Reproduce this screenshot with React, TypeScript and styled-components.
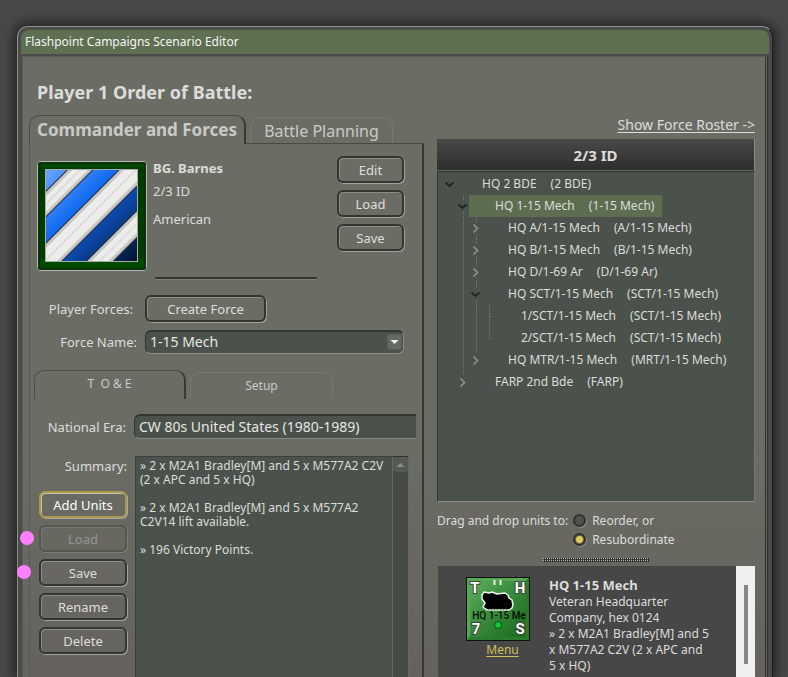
import React from 'react';
import styled, { createGlobalStyle, css } from 'styled-components';

const GlobalStyle = createGlobalStyle`
  * { box-sizing: border-box; }
  body {
    margin: 0;
    background: #484848;
    color: #dcdcda;
    font-family: "Noto Sans", "DejaVu Sans", sans-serif;
    font-size: 13px;
    overflow: hidden;
  }
  button, input, select, textarea { font: inherit; color: inherit; margin: 0; }
`;

const field = '#4b524b';

const Desktop = styled.div`
  display: flex;
  height: 100vh;
  padding: 26px 15px 0 17px;
`;

const AppWindow = styled.main`
  flex: 1;
  min-width: 0;
  display: flex;
  flex-direction: column;
  padding: 3px 3px 0;
  background: #4b4b4a;
  border: 1px solid #8e8e8c;
  border-right-color: #1c1c1c;
  border-bottom: 0;
  border-radius: 11px 11px 0 0;
  box-shadow: 0 0 12px 3px rgba(0, 0, 0, 0.55);
`;

const TitleBar = styled.header`
  flex: none;
  height: 24px;
  padding-left: 4px;
  border-radius: 8px 8px 0 0;
  background: #5f7052;
  color: #f4f4f2;
  font-size: 12px;
  line-height: 24px;
`;

const Content = styled.div`
  flex: 1;
  min-height: 0;
  display: flex;
  flex-direction: column;
  margin: 2px 1px 0;
  padding: 23px 10px 0 6px;
  border: 1px solid #5a5b56;
  border-right: 3px double #2f302d;
  border-bottom: 0;
  background: linear-gradient(#6b6d65 0, #6b6d65 60%, #65625d 100%);
`;

const Heading = styled.h1`
  margin: 0 0 11px 8px;
  font-size: 18px;
  line-height: 24px;
`;

const Columns = styled.div`
  flex: 1;
  min-height: 0;
  display: grid;
  grid-template-columns: minmax(0, 395fr) minmax(0, 318fr);
  gap: 13px;
`;

const Column = styled.section`
  min-height: 0;
  display: flex;
  flex-direction: column;
`;

const TabRow = styled.div<{ $inset?: boolean }>`
  flex: none;
  display: flex;
  ${(p) => p.$inset && css`margin: 16px 0 15px;`}
`;

const TabRest = styled.div<{ $line?: boolean }>`
  flex: 1;
  display: flex;
  align-items: flex-end;
  padding-left: 4px;
  border-bottom: 1px solid ${(p) => (p.$line ? '#484a45' : 'transparent')};
`;

const Tab = styled.button<{ $active?: boolean; $small?: boolean }>`
  height: ${(p) => (p.$active ? 29 : 26)}px;
  width: ${(p) => (p.$small ? (p.$active ? 152 : 143) : p.$active ? 217 : 143)}px;
  padding: 0 0 ${(p) => (p.$active ? (p.$small ? 4 : 2) : 0)}px;
  white-space: pre;
  background: transparent;
  border: 1px solid #777973;
  border-bottom: 0;
  border-radius: 10px 10px 0 0;
  color: #c9cac6;
  font-size: ${(p) => (p.$small ? 12 : p.$active ? 17 : 16)}px;
  ${(p) =>
    p.$active &&
    css`
      border-color: #4c4e48;
      border-right: 2px solid #373935;
      font-weight: ${p.$small ? 400 : 700};
    `}
`;

const Panel = styled.div`
  flex: 1;
  min-height: 0;
  display: flex;
  flex-direction: column;
  padding: 12px 0 0 4px;
  border-left: 1px solid #595b55;
  border-right: 2px solid #363834;
`;

const Commander = styled.div`
  display: grid;
  grid-template-columns: 110px minmax(0, 1fr) 67px;
  gap: 6px;
  padding: 0 18px 0 3px;
`;

const Insignia = styled.svg`
  width: 110px;
  height: 110px;
  margin-top: 5px;
`;

const Bio = styled.div`
  padding-top: 3px;
  line-height: 18px;
  strong { display: block; }
  p { margin: 5px 0 10px; }
`;

const ButtonStack = styled.div`
  display: flex;
  flex-direction: column;
  gap: 7px;
`;

const Button = styled.button<{ $focus?: boolean; $wide?: boolean }>`
  height: 27px;
  width: ${(p) => (p.$wide ? '121px' : '100%')};
  padding: 0;
  background: transparent;
  border: 2px solid #343632;
  border-radius: 6px;
  box-shadow: 1px 1px 0 #a0a29c, inset 1px 1px 0 #8b8d86;
  color: #dededc;
  font-size: 13px;
  &:disabled {
    color: #93958f;
    border-color: #555750;
    box-shadow: 1px 1px 0 #7b7d77, inset 1px 1px 0 #74766f;
  }
  ${(p) =>
    p.$focus &&
    css`
      color: #fff;
      border-color: #a89a4c;
      box-shadow: 1px 1px 0 #a8a9a2, inset 1px 1px 0 #c9c6a8;
    `}
`;

const Rule = styled.hr`
  width: 162px;
  height: 2px;
  margin: 6px 0 16px 121px;
  border: 0;
  border-radius: 2px;
  background: #353733;
  box-shadow: 0 1px 0 #7c7e78;
`;

const FormRow = styled.div<{ $label: number; $gap: number; $top?: number }>`
  flex: none;
  display: grid;
  grid-template-columns: ${(p) => p.$label}px minmax(0, 1fr);
  column-gap: ${(p) => p.$gap}px;
  align-items: center;
  margin-top: ${(p) => p.$top ?? 0}px;
`;

const Label = styled.label`
  text-align: right;
  white-space: nowrap;
  font-size: 13px;
`;

const SelectBox = styled.div`
  position: relative;
  margin-right: 18px;
  svg { position: absolute; right: 2px; top: 4px; pointer-events: none; }
`;

const Select = styled.select`
  display: block;
  appearance: none;
  width: 100%;
  height: 24px;
  padding: 0 4px 2px;
  background: ${field};
  border: 1px solid #33362f;
  border-top-width: 2px;
  border-right-color: #8a8c86;
  border-bottom-color: #8a8c86;
  border-radius: 6px;
  color: #e6e6e4;
  font-size: 14px;
`;

const TextBox = styled.input`
  width: calc(100% - 6px);
  height: 25px;
  padding: 0 4px 1px;
  background: ${field};
  border: 1px solid #33362f;
  border-top-width: 2px;
  border-right: 0;
  border-bottom-color: #858781;
  border-radius: 6px 0 0 6px;
  color: #e6e6e4;
  font-size: 14px;
`;

const SummaryArea = styled.div`
  flex: 1;
  min-height: 0;
  display: grid;
  grid-template-columns: 88px minmax(0, 1fr) 16px;
  padding: 17px 13px 0 5px;
`;

const Actions = styled.div`
  display: flex;
  flex-direction: column;
  gap: 15px;
  label { line-height: 20px; }
`;

const SummaryText = styled.textarea`
  margin-left: 8px;
  padding: 2px 0 0 4px;
  resize: none;
  overflow: hidden;
  outline: 0;
  background: ${field};
  border: 1px solid #3c403a;
  border-bottom: 0;
  border-right-color: #666963;
  font-size: 12px;
  line-height: 14px;
`;

const ScrollTrack = styled.div`
  background: #464a45;
  border-top: 1px solid #2f322d;
  border-right: 1px solid #666963;
`;

const ScrollUp = styled.button`
  display: block;
  width: 15px;
  height: 15px;
  padding: 0;
  border: 0;
  border-radius: 2px;
  background: #545a53;
  svg { display: block; }
`;

const RosterLink = styled.a`
  align-self: flex-end;
  height: 24px;
  font-size: 14px;
  line-height: 20px;
  white-space: nowrap;
  color: #dcdcda;
  text-underline-offset: 2px;
`;

const TreeHeader = styled.h2`
  flex: none;
  height: 32px;
  margin: 0;
  background: linear-gradient(#494949, #2d2d2d);
  border-right: 1px solid #8a8c86;
  border-bottom: 1px solid #656862;
  font-size: 15px;
  line-height: 32px;
  text-align: center;
`;

const Tree = styled.ul`
  flex: none;
  height: 331px;
  margin: 0;
  padding: 1px 0 0 5px;
  list-style: none;
  background: ${field};
  border: 1px solid #30342f;
  border-right-color: #747771;
  border-bottom-color: #8a8c86;
`;

const TreeRow = styled.li`
  display: flex;
  height: 22px;
  svg { flex: none; }
`;

const TreeLabel = styled.span<{ $selected?: boolean }>`
  display: flex;
  gap: 14px;
  padding: 0 8px 0 26px;
  font-size: 12px;
  line-height: 22px;
  white-space: nowrap;
  background: ${(p) => (p.$selected ? '#5d6d50' : 'transparent')};
`;

const DropMode = styled.fieldset`
  flex: none;
  display: grid;
  grid-template-columns: auto 1fr;
  column-gap: 5px;
  margin: 9px 0 0;
  padding: 0;
  border: 0;
  font-size: 12px;
  line-height: 19px;
  white-space: nowrap;
`;

const Choices = styled.div`
  display: flex;
  flex-direction: column;
  label { display: flex; align-items: center; gap: 6px; }
`;

const Radio = styled.input`
  appearance: none;
  width: 13px;
  height: 13px;
  border: 2px solid #2f322e;
  border-radius: 50%;
  background: #4d544c;
  box-shadow: 1px 1px 0 #8a8c86;
  &:checked { background: radial-gradient(circle, #dcca5a 0 3px, #6d6a40 4px); }
`;

const Grip = styled.div`
  flex: none;
  width: 106px;
  height: 4px;
  margin: 9px auto 4px;
  background:
    repeating-linear-gradient(90deg, transparent 0 1px, #2e2e2c 1px 2px),
    repeating-linear-gradient(#b4b4b0 0 1px, #4a4a48 1px 2px);
`;

const Detail = styled.article`
  flex: 1;
  min-height: 0;
  overflow: hidden;
  display: grid;
  grid-template-columns: 64px minmax(0, 1fr) 19px;
  column-gap: 19px;
  margin-left: 1px;
  padding-left: 28px;
  background: #474747;
`;

const UnitCard = styled.div`
  padding-top: 11px;
  text-align: center;
  line-height: 17px;
  svg { display: block; width: 64px; height: 64px; }
  a { font-size: 12px; color: #cfbf55; text-underline-offset: 2px; padding-left: 9px; }
`;

const UnitText = styled.div`
  margin-right: 6px;
  padding-top: 10px;
  font-size: 12px;
  line-height: 16px;
  h3 { margin: 0; font-size: 13px; line-height: 18px; }
  p { margin: 0; }
`;

const PaneScroll = styled.div`
  padding: 19px 7px 0 8px;
  background: #f0f0f0;
  &::before { content: ''; display: block; height: 79px; background: #868686; }
`;

const Marker = styled.span<{ $x: number; $y: number }>`
  position: absolute;
  left: ${(p) => p.$x}px;
  top: ${(p) => p.$y}px;
  width: 14px;
  height: 14px;
  border-radius: 50%;
  background: #ff80ff;
`;

type Cell = 'blank' | 'line' | 'branch' | 'end' | 'open' | 'closed' | 'openRoot' | 'closedLast';

const cellLines: Record<Cell, string> = {
  blank: '',
  line: 'M7.5 0V22',
  branch: 'M7.5 0V22M7.5 11.5H10',
  end: 'M7.5 0V11.5H10',
  open: 'M7.5 0V5M7.5 17V22',
  closed: 'M7.5 0V5M7.5 17V22',
  openRoot: '',
  closedLast: 'M7.5 0V4',
};

function TreeCell({ kind }: { kind: Cell }) {
  const opened = kind === 'open' || kind === 'openRoot';
  const closed = kind === 'closed' || kind === 'closedLast';
  return (
    <svg width="13" height="22" fill="none" aria-hidden="true">
      <path d={cellLines[kind]} stroke="#747a72" strokeDasharray="1 1" />
      {opened && <path d="M2.5 9.5L6.5 13L10.5 9.5" stroke="#222421" strokeWidth="1.7" />}
      {closed && <path d="M4.5 7.5L8.5 11.5L4.5 15.5" stroke="#8d918b" strokeWidth="1.7" />}
    </svg>
  );
}

const units: { cells: Cell[]; name: string; short: string }[] = [
  { cells: ['openRoot'], name: 'HQ 2 BDE', short: '2 BDE' },
  { cells: ['blank', 'open'], name: 'HQ 1-15 Mech', short: '1-15 Mech' },
  { cells: ['blank', 'line', 'closed'], name: 'HQ A/1-15 Mech', short: 'A/1-15 Mech' },
  { cells: ['blank', 'line', 'closed'], name: 'HQ B/1-15 Mech', short: 'B/1-15 Mech' },
  { cells: ['blank', 'line', 'closed'], name: 'HQ D/1-69 Ar', short: 'D/1-69 Ar' },
  { cells: ['blank', 'line', 'open'], name: 'HQ SCT/1-15 Mech', short: 'SCT/1-15 Mech' },
  { cells: ['blank', 'line', 'line', 'branch'], name: '1/SCT/1-15 Mech', short: 'SCT/1-15 Mech' },
  { cells: ['blank', 'line', 'line', 'end'], name: '2/SCT/1-15 Mech', short: 'SCT/1-15 Mech' },
  { cells: ['blank', 'line', 'closedLast'], name: 'HQ MTR/1-15 Mech', short: 'MRT/1-15 Mech' },
  { cells: ['blank', 'closedLast'], name: 'FARP 2nd Bde', short: 'FARP' },
];

const summary = `» 2 x M2A1 Bradley[M] and 5 x M577A2 C2V (2 x APC and 5 x HQ)

» 2 x M2A1 Bradley[M] and 5 x M577A2 C2V14 lift available.

» 196 Victory Points.`;

const stripes = [
  { d: 'M-14 66L66 -14', width: 18 },
  { d: 'M-6 114L114 -6', width: 24 },
  { d: 'M43 120L120 43', width: 19 },
];

function DivisionPatch() {
  return (
    <Insignia viewBox="0 0 110 110" role="img" aria-label="Division insignia">
      <defs>
        <linearGradient id="blue" x1="0" y1="0" x2="1" y2="1">
          <stop offset="0" stopColor="#6aa6ff" />
          <stop offset="0.4" stopColor="#0f68f0" />
          <stop offset="0.7" stopColor="#0a3c8c" />
          <stop offset="1" stopColor="#04122c" />
        </linearGradient>
        <clipPath id="face"><rect x="9" y="9" width="91" height="91" /></clipPath>
      </defs>
      <rect x="0.5" y="0.5" width="109" height="109" rx="3" fill="#003c00" stroke="#b6b8b2" />
      <rect x="2" y="2" width="106" height="106" fill="none" stroke="#1c241a" />
      <path d="M3 107V98H107V107ZM3 3H107V6H3Z" fill="#004a00" />
      <rect x="8.5" y="8.5" width="92" height="92" fill="url(#blue)" stroke="#a9aba5" />
      <g clipPath="url(#face)">
        {stripes.map((s) => (
          <g key={s.d}>
            <path d={s.d} stroke="#24303c" strokeWidth={s.width + 1} />
            <path d={s.d} stroke="#c6c6c2" strokeWidth={s.width - 1} />
            <path d={s.d} stroke="#ececea" strokeWidth={s.width - 7} />
            <path d={s.d} stroke="#dededb" strokeWidth="2" />
          </g>
        ))}
      </g>
    </Insignia>
  );
}

function UnitCounter() {
  return (
    <svg viewBox="0 0 64 64" role="img" aria-label="HQ 1-15 Mech counter">
      <defs>
        <linearGradient id="counter" x1="0" y1="0" x2="1" y2="1">
          <stop offset="0" stopColor="#5cae5c" />
          <stop offset="0.5" stopColor="#37893a" />
          <stop offset="1" stopColor="#1c681c" />
        </linearGradient>
      </defs>
      <rect width="64" height="64" fill="#0c120c" />
      <rect x="1" y="1" width="62" height="62" fill="#2b7a2d" />
      <path d="M1 63V1H63L59 4H4V59Z" fill="#58a658" />
      <rect x="4" y="4" width="56" height="56" fill="url(#counter)" />
      <path d="M28.5 3V8M34.5 3V8" stroke="#e6f0e6" strokeWidth="2" />
      <path
        d="M16 18L18 15L23 16L26 15L31 17L39 16L42 18L43 21L46 23L47 28L46 31L43 33H21L17 30L19 26L16 22Z"
        fill="#000" stroke="#f0f5f0" strokeWidth="1.5" strokeLinejoin="round"
      />
      <path d="M22 32.5H43" stroke="#3f8a42" strokeWidth="1.5" strokeDasharray="1 2" />
      <circle cx="32" cy="48" r="3.5" fill="#0fcb3c" stroke="#0b4a14" />
      <g fontFamily="Roboto, sans-serif" fontWeight="700" fontSize="15" fill="#fff" stroke="#3c463c" strokeWidth="2" paintOrder="stroke" textAnchor="middle">
        <text x="9" y="16">T</text>
        <text x="54" y="16">H</text>
        <text x="10" y="57">7</text>
        <text x="54" y="57">S</text>
      </g>
      <text x="33" y="42" textAnchor="middle" fontFamily="Roboto, sans-serif" fontWeight="500" fontSize="10" fill="#061006">HQ 1-15 Me</text>
    </svg>
  );
}

export default function App() {
  return (
    <>
      <GlobalStyle />
      <Desktop>
        <AppWindow>
          <TitleBar>Flashpoint Campaigns Scenario Editor</TitleBar>
          <Content>
            <Heading>Player 1 Order of Battle:</Heading>
            <Columns>
              <Column>
                <TabRow role="tablist">
                  <Tab $active role="tab" aria-selected="true">Commander and Forces</Tab>
                  <TabRest $line><Tab role="tab" aria-selected="false">Battle Planning</Tab></TabRest>
                </TabRow>
                <Panel>
                  <Commander>
                    <DivisionPatch />
                    <Bio>
                      <strong>BG. Barnes</strong>
                      <p>2/3 ID</p>
                      <p>American</p>
                    </Bio>
                    <ButtonStack>
                      <Button>Edit</Button>
                      <Button>Load</Button>
                      <Button>Save</Button>
                    </ButtonStack>
                  </Commander>
                  <Rule />
                  <FormRow $label={99} $gap={12}>
                    <Label htmlFor="create">Player Forces:</Label>
                    <Button id="create" $wide>Create Force</Button>
                  </FormRow>
                  <FormRow $label={103} $gap={8} $top={8}>
                    <Label htmlFor="force">Force Name:</Label>
                    <SelectBox>
                      <Select id="force"><option>1-15 Mech</option></Select>
                      <svg width="15" height="16" aria-hidden="true">
                        <rect x="0.5" y="0.5" width="14" height="15" rx="2" fill="#666961" stroke="#5b5e57" />
                        <path d="M3.5 6H11.5L7.5 10Z" fill="#f2f2f0" />
                      </svg>
                    </SelectBox>
                  </FormRow>
                  <TabRow $inset role="tablist">
                    <Tab $active $small role="tab" aria-selected="true">T  O &amp; E</Tab>
                    <TabRest><Tab $small role="tab" aria-selected="false">Setup</Tab></TabRest>
                  </TabRow>
                  <FormRow $label={92} $gap={8}>
                    <Label htmlFor="era">National Era:</Label>
                    <TextBox id="era" readOnly value="CW 80s United States (1980-1989)" />
                  </FormRow>
                  <SummaryArea>
                    <Actions>
                      <Label htmlFor="summary">Summary:</Label>
                      <ButtonStack>
                        <Button $focus>Add Units</Button>
                        <Button disabled>Load</Button>
                        <Button>Save</Button>
                        <Button>Rename</Button>
                        <Button>Delete</Button>
                      </ButtonStack>
                    </Actions>
                    <SummaryText id="summary" readOnly value={summary} />
                    <ScrollTrack>
                      <ScrollUp aria-label="Scroll up">
                        <svg width="15" height="15"><path d="M3.5 10L7.5 6L11.5 10Z" fill="#8b908a" /></svg>
                      </ScrollUp>
                    </ScrollTrack>
                  </SummaryArea>
                </Panel>
              </Column>
              <Column>
                <RosterLink href="#roster">Show Force Roster -&gt;</RosterLink>
                <TreeHeader>2/3 ID</TreeHeader>
                <Tree role="tree">
                  {units.map((u, i) => (
                    <TreeRow key={u.name} role="treeitem" aria-level={u.cells.length} aria-selected={i === 1}>
                      {u.cells.map((c, k) => <TreeCell key={k} kind={c} />)}
                      <TreeLabel $selected={i === 1}>
                        <span>{u.name}</span>
                        <span>({u.short})</span>
                      </TreeLabel>
                    </TreeRow>
                  ))}
                </Tree>
                <DropMode>
                  <span>Drag and drop units to:</span>
                  <Choices>
                    <label><Radio type="radio" name="drop" />Reorder, or</label>
                    <label><Radio type="radio" name="drop" defaultChecked />Resubordinate</label>
                  </Choices>
                </DropMode>
                <Grip />
                <Detail>
                  <UnitCard>
                    <UnitCounter />
                    <a href="#menu">Menu</a>
                  </UnitCard>
                  <UnitText>
                    <h3>HQ 1-15 Mech</h3>
                    <p>Veteran Headquarter Company, hex 0124</p>
                    <p>» 2 x M2A1 Bradley[M] and 5 x M577A2 C2V (2 x APC and 5 x HQ)</p>
                  </UnitText>
                  <PaneScroll />
                </Detail>
              </Column>
            </Columns>
          </Content>
        </AppWindow>
        <Marker $x={20} $y={531} />
        <Marker $x={17} $y={565} />
      </Desktop>
    </>
  );
}
